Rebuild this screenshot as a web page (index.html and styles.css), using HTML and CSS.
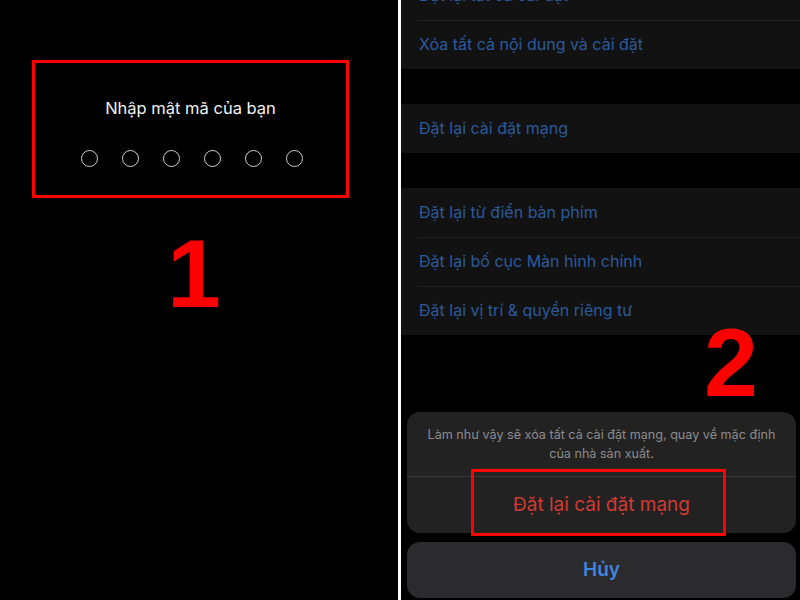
FILE: index.html
```html
<!DOCTYPE html>
<html lang="vi">
<head>
  <meta charset="UTF-8" />
  <title>Đặt lại cài đặt mạng</title>
  <link rel="stylesheet" href="styles.css">
</head>
<body>

<div class="left-panel">
  <div class="passcode-box">
    <div class="passcode-title">Nhập mật mã của bạn</div>
    <div class="dots">
      <span class="dot"></span>
      <span class="dot"></span>
      <span class="dot"></span>
      <span class="dot"></span>
      <span class="dot"></span>
      <span class="dot"></span>
    </div>
  </div>
  <div class="step-num">1</div>
</div>

<div class="divider"></div>

<div class="right-panel">
  <div class="group first">
    <div class="row">Đặt lại tất cả cài đặt</div>
    <div class="row">Xóa tất cả nội dung và cài đặt</div>
  </div>
  <div class="group">
    <div class="row">Đặt lại cài đặt mạng</div>
  </div>
  <div class="group">
    <div class="row">Đặt lại từ điển bàn phím</div>
    <div class="row">Đặt lại bố cục Màn hình chính</div>
    <div class="row">Đặt lại vị trí &amp; quyền riêng tư</div>
  </div>

  <div class="step-num two">2</div>

  <div class="sheet">
    <div class="sheet-card">
      <div class="sheet-msg">Làm như vậy sẽ xóa tất cả cài đặt mạng, quay về mặc định<br>của nhà sản xuất.</div>
      <div class="sheet-action">Đặt lại cài đặt mạng</div>
    </div>
    <div class="sheet-cancel">Hủy</div>
    <div class="mark"></div>
  </div>
</div>

</body>
</html>
```

FILE: styles.css
```css
html, body { margin: 0; padding: 0; height: 100%; background: #000; overflow: hidden; }
body { display: flex; width: 800px; height: 600px; font-family: "Inter", "Noto Sans", sans-serif; }

.left-panel { flex: 0 0 398px; display: flex; flex-direction: column; align-items: flex-start; }
.passcode-box { margin: 60px 0 0 32px; width: 311px; height: 132px; border: 3px solid #f00; display: flex; flex-direction: column; align-items: center; }
.passcode-title { margin-top: 35px; color: #f2f2f2; font-size: 16.5px; }
.dots { display: flex; gap: 24px; margin-top: 32px; margin-left: 2px; }
.dot { width: 15px; height: 15px; border: 1.6px solid #d0d0d0; border-radius: 50%; }
.step-num { color: #ff0000; font-family: "Liberation Sans", Arial, sans-serif; font-weight: bold; font-size: 97px; line-height: 1; }
.left-panel .step-num { margin: 27px 0 0 167px; }

.divider { flex: 0 0 3px; background: #fff; }

.right-panel { flex: 1; position: relative; }
.group { background: #121212; margin-bottom: 35px; }
.group.first { margin-top: -29px; }
.row { height: 49px; line-height: 49px; padding-left: 18px; color: #2b5a9c; font-size: 16px; position: relative; }
.row + .row::before { content: ""; position: absolute; top: 0; left: 17px; right: 0; border-top: 1px solid #222; }

.step-num.two { position: absolute; left: 303px; top: 314px; }

.sheet { position: absolute; left: 6px; right: 4px; top: 412px; display: flex; flex-direction: column; gap: 9px; }
.sheet-card { background: #222; border-radius: 13px; overflow: hidden; }
.sheet-msg { color: #8c8c90; font-size: 12.6px; line-height: 19px; text-align: center; padding: 13px 4px 13px; white-space: nowrap; border-bottom: 1px solid #3a3a3c; }
.sheet-action { height: 56px; line-height: 56px; text-align: center; color: #d33a33; font-size: 19px; }
.sheet-cancel { height: 56px; line-height: 56px; text-align: center; background: #2b2b2d; border-radius: 13px; color: #3f86e0; font-size: 19px; font-weight: 600; }
.mark { position: absolute; left: 64px; top: 57px; width: 249px; height: 61px; border: 3px solid #f00; }
```
